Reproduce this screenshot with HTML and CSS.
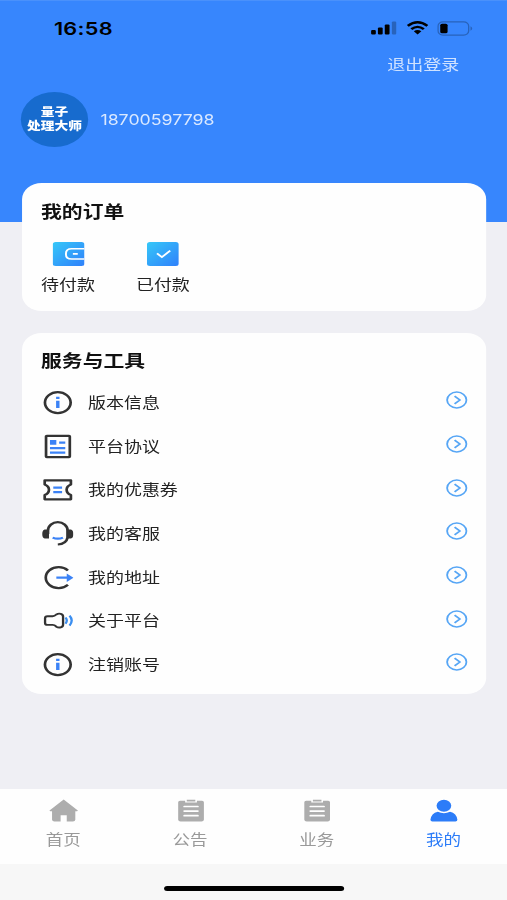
FILE: index.html
```html
<!DOCTYPE html>
<html lang="zh-CN">
<head>
<meta charset="utf-8">
<title>我的</title>
<link rel="stylesheet" href="styles.css">
</head>
<body>
<svg width="0" height="0" class="defs" aria-hidden="true">
  <defs>
    <linearGradient id="g" x1="0" y1="0" x2="1" y2="1"><stop offset="0" stop-color="#36c8f8"/><stop offset="1" stop-color="#2f80fb"/></linearGradient>
    <symbol id="go" viewBox="0 0 18 18"><circle cx="9" cy="9" r="7.9" fill="none" stroke="#57a6f5" stroke-width="1.5"/><path d="M7.200 5.200 11.500 9 7.200 12.800" fill="none" stroke="#57a6f5" stroke-width="1.600"/></symbol>
    <symbol id="info" viewBox="0 0 26 26"><circle cx="13.2" cy="12.600" r="10.500" fill="none" stroke="#333" stroke-width="2.200"/><path d="M13.200 6.800v2.300M13.200 10.800v7.300" stroke="#3b82f6" stroke-width="2.800"/></symbol>
    <symbol id="board" viewBox="0 0 24 24"><path d="M3 1.800h4.200v1.800h9.600V1.800H21q1.500 0 1.500 1.500V20.500q0 2-2 2h-17q-2 0-2-2V3.300Q1.500 1.800 3 1.800Z" fill="#adadad"/><path d="M8.500.8h7v1.800h-7z" fill="#adadad"/><path d="M6.500 7.500h11M6.500 12.100h11M6.500 16.700h11" stroke="#fff" stroke-width="1.700" stroke-linecap="round"/></symbol>
  </defs>
</svg>
<div class="phone">
  <header class="header">
    <div class="status">
      <span class="time">16:58</span>
      <svg class="signal" viewBox="0 0 21 14"><rect x="0" y="9" width="3.9" height="4.600" rx="1"/><rect x="5.600" y="6.600" width="3.900" height="7" rx="1"/><rect x="11.200" y="3.600" width="3.900" height="10" rx="1"/><rect x="17" y=".6" width="3.600" height="13" rx="1" fill="#2863bb"/></svg>
      <svg class="wifi" viewBox="0 0 18 14"><path d="M1 4.800Q9-2.200 17 4.800M3.900 8.100Q9 3.600 14.100 8.100" fill="none" stroke="#000" stroke-width="2.300"/><path d="M5.900 10.200Q9 7.800 12.100 10.200L9 13.600Z"/></svg>
      <svg class="battery" viewBox="0 0 29 15"><rect x=".7" y=".9" width="25" height="13.200" rx="4" fill="none" stroke="#2863bb" stroke-width="1.100"/><rect x="2.500" y="2.800" width="6" height="9.400" rx="1.500"/><path d="M27.200 5.300q1.400.7 1.400 2.200t-1.400 2.200Z" fill="#2863bb"/></svg>
    </div>
    <div class="logout">退出登录</div>
    <div class="profile">
      <div class="avatar"><span>量子</span><span>处理大师</span></div>
      <span class="number">18700597798</span>
    </div>
  </header>

  <main class="main">
    <section class="card orders">
      <h2>我的订单</h2>
      <div class="order-list">
        <div class="order">
          <svg viewBox="0 0 26 24"><rect width="26" height="24" rx="2.500" fill="url(#g)"/><path d="M26 6.800H15.500q-4.700 0-4.700 5.100t4.700 5.100H26" fill="none" stroke="#fff" stroke-width="1.600"/><path d="M16.500 11.900h4" stroke="#fff" stroke-width="1.900"/></svg>
          <span>待付款</span>
        </div>
        <div class="order">
          <svg viewBox="0 0 26 24"><rect width="26" height="24" rx="2.500" fill="url(#g)"/><path d="m8.200 11.300 4 3.800 6.800-6.500" fill="none" stroke="#fff" stroke-width="1.700"/></svg>
          <span>已付款</span>
        </div>
      </div>
    </section>

    <section class="card tools">
      <h2>服务与工具</h2>
      <ul>
        <li><svg class="icon"><use href="#info"/></svg><span>版本信息</span><svg class="go"><use href="#go"/></svg></li>
        <li><svg class="icon" viewBox="0 0 26 26"><rect x="3.600" y="1.800" width="19.400" height="21.400" rx=".6" fill="none" stroke="#333" stroke-width="2.200"/><path d="M6.800 6h5.200v4.800H6.800z" fill="#3b82f6"/><path d="M14.300 8.700h5M6.800 14.200h12.500M6.800 18.700h12.500" stroke="#3b82f6" stroke-width="2.200"/></svg><span>平台协议</span><svg class="go"><use href="#go"/></svg></li>
        <li><svg class="icon" viewBox="0 0 26 26"><path d="M2.500 3.300h21.400v4.200q-3.500 1.700-3.500 5.300t3.500 5.300v4.200H2.500v-4.200q3.500-1.700 3.500-5.300T2.500 7.500Z" fill="none" stroke="#333" stroke-width="2.200" stroke-linejoin="round"/><path d="M9.500 10.600h7.200M9.500 15.200h7.200" stroke="#3b82f6" stroke-width="2.200"/></svg><span>我的优惠券</span><svg class="go"><use href="#go"/></svg></li>
        <li><svg class="icon" viewBox="0 0 26 26"><path d="M5.200 13V9.500a8 8.300 0 0 1 16 0v7q-1.100 6.500-8 7" fill="none" stroke="#333" stroke-width="2.200"/><path d="M6 8.500v9H2.500Q.5 17 .5 13T2.500 8.500ZM20.400 8.500v9h3.500q2-.5 2-4.500t-2-4.500Z" fill="#333"/><path d="M9 16.600q4.200 2.200 8.400 0" fill="none" stroke="#3b82f6" stroke-width="2.200"/></svg><span>我的客服</span><svg class="go"><use href="#go"/></svg></li>
        <li><svg class="icon" viewBox="0 0 26 26"><path d="M21.500 5.400A10.500 10.500 0 1 0 21.500 19.800" fill="none" stroke="#333" stroke-width="2.200"/><path d="M12 12.700h10" stroke="#3b82f6" stroke-width="2.300"/><path d="M20.500 8.500 26 12.700l-5.500 4.200Z" fill="#3b82f6"/></svg><span>我的地址</span><svg class="go"><use href="#go"/></svg></li>
        <li><svg class="icon" viewBox="0 0 26 26"><path d="M4.800 8.300h4.200q1.500 0 3-1.800 1.800-1.300 3.600-.6 1.900.7 1.900 2.600v8.200q0 1.900-1.900 2.600-1.800.7-3.600-.6-1.500-1.800-3-1.800H4.800Q2.800 16.900 2.800 14.900v-4.600Q2.800 8.300 4.800 8.300Z" fill="none" stroke="#333" stroke-width="1.900"/><path d="M19.500 9.500q2.100 3.100 0 6.200M22.800 7.600q3.500 5 0 10" fill="none" stroke="#3b8ef0" stroke-width="1.900"/></svg><span>关于平台</span><svg class="go"><use href="#go"/></svg></li>
        <li><svg class="icon"><use href="#info"/></svg><span>注销账号</span><svg class="go"><use href="#go"/></svg></li>
      </ul>
    </section>
  </main>

  <nav class="tabs">
    <div class="tab"><svg viewBox="0 0 24 24"><path d="M12 .5 23.300 11.300q.7.900-.5.900H21.500V20.500q0 2-2 2h-5v-6.200h-5v6.200h-5q-2 0-2-2v-8.300H1.200q-1.200 0-.5-.9Z" fill="#adadad"/></svg><span>首页</span></div>
    <div class="tab"><svg viewBox="0 0 24 24"><use href="#board"/></svg><span>公告</span></div>
    <div class="tab"><svg viewBox="0 0 24 24"><use href="#board"/></svg><span>业务</span></div>
    <div class="tab active"><svg viewBox="0 0 24 24"><circle cx="11.500" cy="6.700" r="6" fill="#2c7cf8"/><path d="M.5 20.800Q1.100 14.100 6.500 12.700q5 2.900 10 0 5.400 1.400 6 8.100 0 1.800-1.600 1.800H2.100Q.5 22.600.5 20.800Z" fill="#2c7cf8"/></svg><span>我的</span></div>
  </nav>
  <footer class="home"><div class="bar"></div></footer>
</div>
</body>
</html>
```
FILE: styles.css
```css
* { box-sizing: border-box; margin: 0; padding: 0; }
body {
  width: 507px;
  height: 900px;
  overflow: hidden;
  background: #efeff4;
  font-family: "Liberation Sans", "Noto Sans CJK SC", sans-serif;
}
.defs { position: absolute; }
/* 414pt layout widened to fill the 507px window */
.phone {
  width: 414px;
  height: 900px;
  display: flex;
  flex-direction: column;
  transform: scaleX(1.2246);
  transform-origin: 0 0;
}
svg { display: block; flex: none; }

.header { height: 222px; flex: none; background: #3786fd; border-top: 1px solid #4a91fb; }
.status { height: 54px; padding: 0 28px 0 44px; display: flex; align-items: center; }
.time { font: 600 17.7px/20px Inter, sans-serif; letter-spacing: .25px; padding-top: 1px; flex: 1; }
.signal { width: 21px; height: 14px; margin-right: 8px; }
.wifi { width: 18px; height: 14px; margin-right: 7px; }
.battery { width: 29px; height: 15px; }
.logout { height: 20px; line-height: 20px; padding-right: 39px; text-align: right; font-size: 14.7px; color: #cfe2ff; }
.profile { margin-top: 17px; padding-left: 17px; display: flex; align-items: center; gap: 10px; }
.avatar {
  width: 55px;
  height: 55px;
  border-radius: 50%;
  background: #176bce;
  color: #fff;
  font-size: 11.2px;
  font-weight: 900;
  line-height: 13.5px;
  display: flex;
  flex-direction: column;
  align-items: center;
  justify-content: center;
}
.number { font: 400 14.5px/20px Inter, sans-serif; color: #dbe9ff; }

.main { flex: 1; padding: 0 17px 0 18px; margin-top: -39px; }
.card { background: #fefefe; border-radius: 16px; padding: 0 16px 0 15.500px; }
.card h2 { font-size: 17px; font-weight: 700; line-height: 24px; color: #111; }
.orders { height: 128px; padding-top: 18px; }
.order-list { display: flex; gap: 33.500px; margin-top: 17px; }
.order { width: 44px; display: flex; flex-direction: column; align-items: center; gap: 9px; }
.order svg { width: 26px; height: 24px; }
.order span { font-size: 14.7px; line-height: 20px; color: #222; white-space: nowrap; }
.tools { height: 361px; margin-top: 22px; padding-top: 17px; }
.tools ul { list-style: none; margin-top: 7px; }
.tools li { height: 43.7px; display: flex; align-items: center; }
.tools li span { flex: 1; margin-left: 12px; font-size: 14.7px; line-height: 20px; color: #222; }
.icon { width: 26px; height: 26px; margin-left: .3px; }
.go { width: 18px; height: 18px; margin: 0 -1px 5px 0; }

.tabs { height: 75px; flex: none; background: #fefefe; display: flex; }
.tab { flex: 1; padding-top: 10px; display: flex; flex-direction: column; align-items: center; gap: 7px; color: #999; }
.tab svg { width: 24px; height: 24px; margin-left: 1px; }
.tab span { font-size: 14.3px; line-height: 20px; }
.tab.active { color: #2c7cf8; }
.home { height: 36px; flex: none; background: #f7f7f7; display: flex; justify-content: center; }
.bar { width: 147px; height: 5px; margin-top: 22px; border-radius: 3px; background: #000; }
```
